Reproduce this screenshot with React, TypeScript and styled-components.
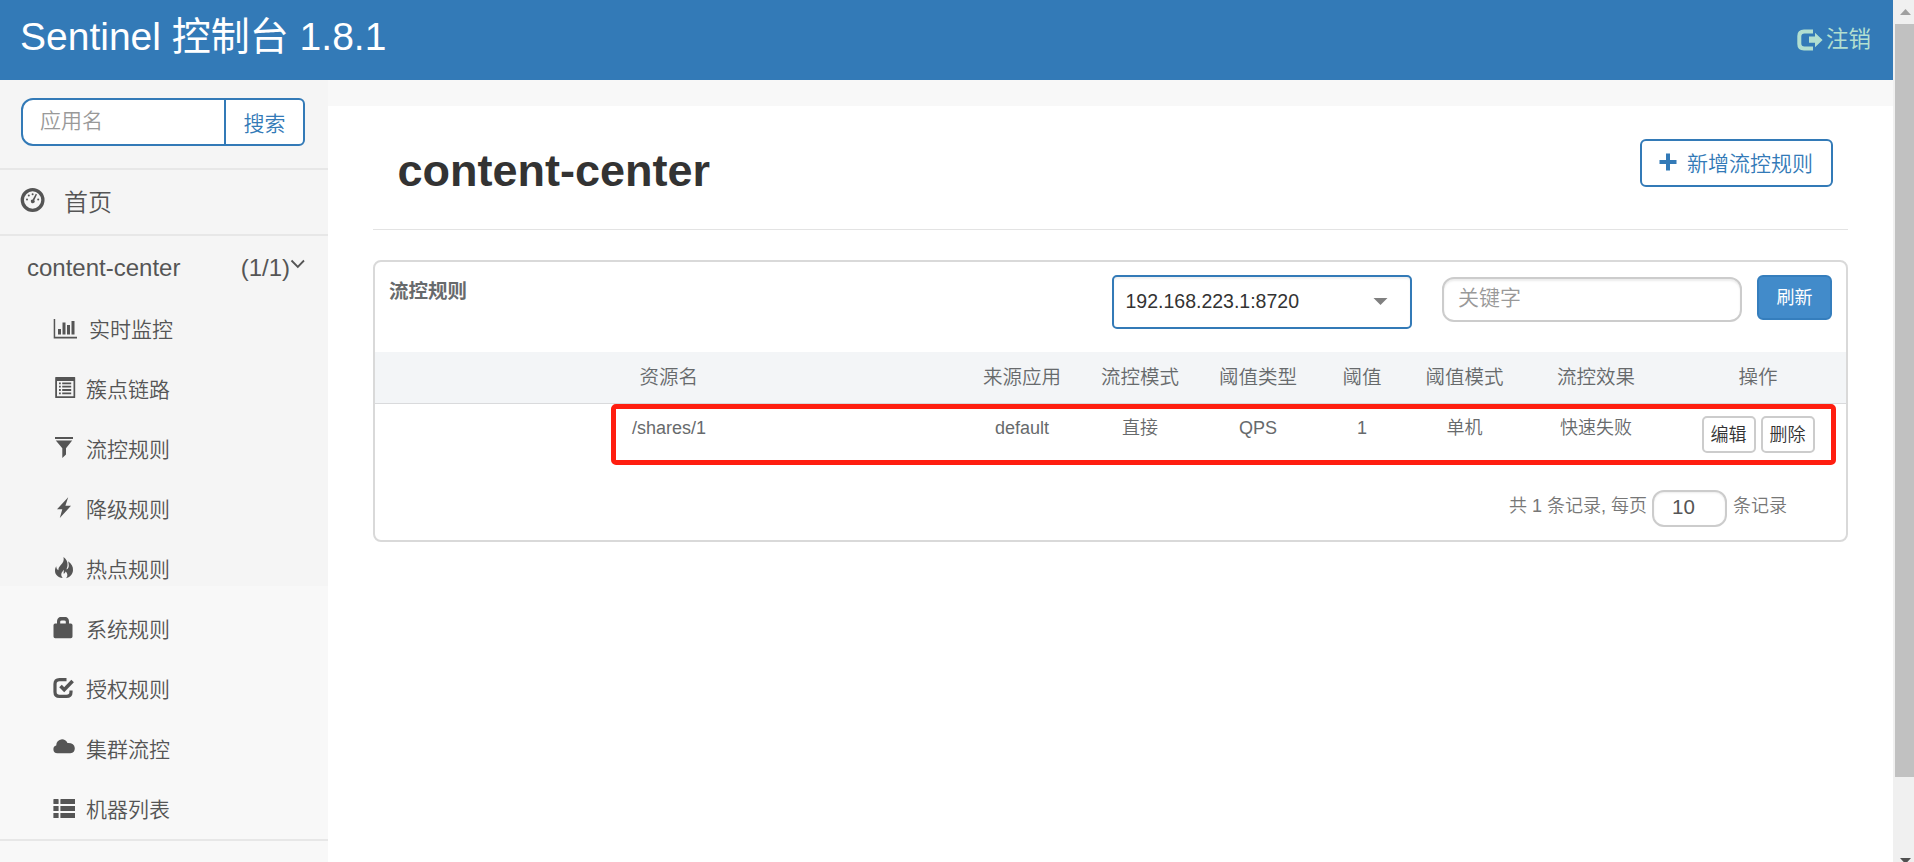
import React from 'react';
import styled, { createGlobalStyle } from 'styled-components';

const GlobalStyle = createGlobalStyle`
  * { box-sizing: border-box; }
  body {
    margin: 0;
    overflow: hidden;
    background: #fff;
    color: #676a6c;
    font-family: "Liberation Sans", "Noto Sans CJK SC", sans-serif;
    font-weight: 350;
  }
  input, button { font-family: inherit; font-weight: inherit; margin: 0; outline: none; }
`;

const Window = styled.div`
  display: flex;
  width: 1914px;
  height: 862px;
`;

const Page = styled.div`
  display: flex;
  flex-direction: column;
  width: 1893px;
  height: 862px;
  background: #fff;
`;

const Header = styled.header`
  display: flex;
  justify-content: space-between;
  height: 80px;
  flex: none;
  padding: 0 22px 0 20px;
  background: #337ab7;
`;

const Brand = styled.div`
  color: #fff;
  font-size: 39px;
  line-height: 74px;
  font-weight: 400;
  white-space: nowrap;
`;

const Logout = styled.a`
  display: flex;
  align-items: center;
  gap: 3px;
  color: #b2dfd0;
  font-size: 22.5px;
  font-weight: 400;
  line-height: 80px;
`;

const Body = styled.div`
  display: flex;
  flex: 1;
  min-height: 0;
`;

const Sidebar = styled.aside`
  width: 328px;
  height: 782px;
  flex: none;
  color: #555;
  background: linear-gradient(#f5f5f5 506px, #f8f8f8 506px);
`;

const SearchBox = styled.div`
  display: flex;
  height: 90px;
  padding: 18px 23px 22px 21px;
  border-bottom: 2px solid #e7e7e7;
`;

const SearchInput = styled.input`
  width: 205px;
  height: 48px;
  padding: 0 0 2px 17px;
  border: 2px solid #337ab7;
  border-radius: 12px 0 0 12px;
  background: #fff;
  font-size: 21px;
  &::placeholder { color: #999; opacity: 1; }
`;

const SearchButton = styled.button`
  width: 81px;
  height: 48px;
  margin-left: -2px;
  padding: 0 0 1px;
  border: 2px solid #337ab7;
  border-radius: 0 6px 6px 0;
  background: #fff;
  color: #337ab7;
  font-size: 21px;
`;

const HomeLink = styled.a`
  display: flex;
  align-items: center;
  gap: 19px;
  height: 66px;
  padding: 0 0 3px 20px;
  border-bottom: 2px solid #e7e7e7;
  font-size: 24px;
  svg { margin-top: -1px; }
`;

const AppLink = styled.a`
  display: flex;
  align-items: center;
  height: 63px;
  padding: 0 23px 0 27px;
  font-size: 24px;
  font-weight: 400;
`;

const AppCount = styled.span`
  margin-left: auto;
`;

const Menu = styled.nav`
  height: 542px;
  border-bottom: 2px solid #e7e7e7;
`;

const MenuItem = styled.a<{ $gap: number }>`
  display: flex;
  align-items: center;
  gap: ${(p) => p.$gap}px;
  height: 60px;
  padding-left: 53px;
  font-size: 21px;
`;

const MenuLabel = styled.span`
  margin-top: -2px;
`;

const Main = styled.main`
  flex: 1;
  padding: 0 45px;
  border-top: 26px solid #f8f8f8;
`;

const TitleBar = styled.div`
  display: flex;
  justify-content: space-between;
  height: 124px;
  padding: 33px 15px 0 24.5px;
  border-bottom: 1px solid #e3e3e3;
`;

const Title = styled.h1`
  margin: 0;
  color: #333;
  font-size: 45px;
  line-height: 64px;
  font-weight: 700;
`;

const AddButton = styled.button`
  display: flex;
  align-items: center;
  gap: 10px;
  width: 193px;
  height: 48px;
  padding: 0 0 2px 17px;
  border: 2px solid #337ab7;
  border-radius: 6px;
  background: #fff;
  color: #337ab7;
  font-size: 21px;
  white-space: nowrap;
`;

const Panel = styled.section`
  height: 282px;
  margin-top: 30px;
  border: 2px solid #d9d9d9;
  border-radius: 8px;
`;

const Toolbar = styled.div`
  display: flex;
  align-items: flex-start;
  height: 90px;
  padding: 13px 14px 0 14px;
`;

const PanelTitle = styled.strong`
  font-size: 19.5px;
  line-height: 32px;
  font-weight: 700;
`;

const MachineSelect = styled.div`
  display: flex;
  align-items: center;
  justify-content: space-between;
  width: 300px;
  height: 54px;
  margin-left: auto;
  padding: 0 22px 1px 11.5px;
  border: 2px solid #337ab7;
  border-radius: 5px;
  box-shadow: inset 0 2px 2px rgba(0, 0, 0, 0.06);
  color: #333;
  font-size: 19.5px;
  font-weight: 400;
`;

const KeywordInput = styled.input`
  width: 300px;
  height: 45px;
  margin: 2px 15px 0 30px;
  padding: 0 14px 3px;
  border: 2px solid #ccc;
  border-radius: 12px;
  box-shadow: inset 0 2px 2px rgba(0, 0, 0, 0.075);
  font-size: 21px;
  &::placeholder { color: #999; opacity: 1; }
`;

const RefreshButton = styled.button`
  width: 75px;
  height: 45px;
  padding: 0 0 3px;
  border: 2px solid #357ebd;
  border-radius: 6px;
  background: #428bca;
  color: #fff;
  font-size: 18px;
  font-weight: 400;
`;

const tableColumns = '240px 348px 118px 118px 118px 90px 115px 148px 1fr';

const HeadRow = styled.div`
  display: grid;
  grid-template-columns: ${tableColumns};
  height: 52px;
  border-bottom: 1px solid #d9dadc;
  background: #f3f5f7;
  font-size: 19.5px;
  line-height: 50px;
`;

const DataRow = styled.div`
  position: relative;
  display: grid;
  grid-template-columns: ${tableColumns};
  height: 61px;
  font-size: 18px;
  line-height: 48px;
`;

const Cell = styled.div<{ $indent?: number }>`
  padding-left: ${(p) => p.$indent ?? 0}px;
  text-align: ${(p) => (p.$indent ? 'left' : 'center')};
  white-space: nowrap;
`;

const ActionCell = styled.div`
  display: flex;
  justify-content: center;
  gap: 5px;
  padding-top: 12px;
`;

const SmallButton = styled.button`
  width: 54px;
  height: 37px;
  padding: 0 0 4px;
  border: 2px solid #ccc;
  border-radius: 5px;
  background: #fff;
  color: #333;
  font-size: 18px;
`;

/* Highlight frame drawn over the table row. */
const Highlight = styled.div`
  position: absolute;
  inset: 0 10px 0 236px;
  border: 5px solid #ff1e10;
  border-radius: 5px;
  pointer-events: none;
`;

const Pager = styled.div`
  display: flex;
  justify-content: flex-end;
  padding: 25px 59px 0 0;
  color: #777;
  font-size: 18px;
  line-height: 33px;
`;

const PageSize = styled.input`
  width: 75px;
  height: 37px;
  margin: 0 6px 0 5px;
  padding: 0 0 3px 18px;
  border: 2px solid #ccc;
  border-radius: 12px;
  box-shadow: inset 0 1px 2px rgba(0, 0, 0, 0.075);
  color: #555;
  font-size: 20.5px;
  font-weight: 400;
`;

const ScrollTrack = styled.div`
  display: flex;
  flex-direction: column;
  justify-content: space-between;
  width: 21px;
  height: 862px;
  padding-left: 2px;
  background: #f0f0f0;
  overflow: hidden;
`;

const ScrollArrow = styled.div<{ $down?: boolean }>`
  flex: none;
  height: ${(p) => (p.$down ? 4 : 24)}px;
  padding: ${(p) => (p.$down ? '0' : '9px')} 0 0 5px;
  overflow: hidden;
  svg { display: block; }
`;

const ScrollThumb = styled.div`
  height: 753px;
  margin-bottom: auto;
  background: #c1c1c1;
`;

const Glyph = styled.svg`
  flex: none;
  fill: currentColor;
`;

type IconProps = { children: React.ReactNode; w?: number; h?: number };

const Icon = ({ children, w = 24, h = 24 }: IconProps) => (
  <Glyph width={w} height={h} viewBox={`0 0 ${w} ${h}`}>
    {children}
  </Glyph>
);

const menu = [
  {
    label: '实时监控',
    gap: 12,
    icon: <path d="M0.7 2h1.5v17.8H24v1.6H0.7zM5 12h3v5.6H5zM9.5 5.600h3v12h-3zM14 8.100h3v9.500h-3zM18.500 4h3v13.600h-3z" />,
  },
  {
    label: '簇点链路',
    icon: (
      <>
        <path fillRule="evenodd" d="M2.8 0h18.8q.6 0 .6.6v19.8q0 .6-.6.6H2.8q-.6 0-.6-.6V.6q0-.6.6-.6zM4 4v15.3h16.5V4z" />
        <path d="M6 5.500h1.800v1.800H6zM9.200 5.500h9v1.800h-9zM6 8.800h1.800v1.800H6zM9.200 8.800h9v1.800h-9zM6 12.100h1.800v1.800H6zM9.200 12.100h9v1.800h-9zM6 15.400h1.800v1.800H6zM9.200 15.400h9v1.800h-9z" />
      </>
    ),
  },
  { label: '流控规则', icon: <path d="M2 0h18v2.100H2zM2.800 3.500h16.400L13 11.200v6.300L9.300 21v-9.800z" /> },
  { label: '降级规则', icon: <path d="M15.200 0.200L4 12.300h5.300L6.800 21 18 8.800h-5.600z" /> },
  {
    label: '热点规则',
    icon: <path d="M10.500 0c3 2.300 4.300 4.800 4 8.200-.1 1.700-.8 3-1 4.300 1.400-.4 2.300-2 2.300-4 0-1.400-.5-3-.7-4.300 3.600 2.400 5.200 5.600 4.900 9.300-.4 4.200-3.300 6.800-6.900 7.700 2-2.500 1.500-4.700-.4-6.700-.5 1.200-1.200 2-2 2.300-.2-1.600.2-2.700.2-4-2.300 2.500-3.800 5-1.200 8.200C4.800 20.300 2 17.600 2 13.700c0-2 .5-3.200 1.200-4.400.2 2 .7 3.300 2.200 3.900-.2-2 .8-3.600 2.600-5.500C10.300 5.400 11.200 3.300 10.500 0z" />,
  },
  {
    label: '系统规则',
    icon: <path fillRule="evenodd" d="M4 6.500V4.700Q4-.3 9-.3h2q5 0 5 5v1.800h1.800q1.700 0 1.700 1.700v11.300q0 1.700-1.700 1.700H2.200Q.5 21.200.5 19.500V8.200q0-1.700 1.700-1.700zM7.200 6.500h5.600V4.600q0-1.200-1.800-1.200H9q-1.800 0-1.800 1.200z" />,
  },
  {
    label: '授权规则',
    icon: (
      <>
        <path d="M13.500 2.600H6.500Q2 2.600 2 7v8q0 4.400 4.500 4.400h7q4.500 0 4.500-4.400v-1.500" fill="none" stroke="currentColor" strokeWidth="3.200" />
        <path d="M7.500 9l3.700 3.700 8.400-8.600" fill="none" stroke="currentColor" strokeWidth="3.600" />
      </>
    ),
  },
  {
    label: '集群流控',
    icon: <path d="M4.500 16.200Q.4 16 .4 12.200.4 9 3.200 8.400 3.400 3 9 2.200q3.600 0 5.500 3.700 6.700-.3 7.300 5 .2 4.800-4.500 5.300z" />,
  },
  {
    label: '机器列表',
    icon: <path d="M1 2h4q.6 0 .6.600v3.800q0 .6-.6.600H1q-.6 0-.6-.6V2.600Q.4 2 1 2zM8 2h14v5H8Q7.400 7 7.400 6.400V2.600Q7.400 2 8 2zM.4 9h5.200v5H.4zM7.400 9H22v5H7.400zM.4 16h5.200v5H.4zM7.400 16H22v5H7.400z" />,
  },
];

const heads = ['来源应用', '流控模式', '阈值类型', '阈值', '阈值模式', '流控效果', '操作'];
const values = ['default', '直接', 'QPS', '1', '单机', '快速失败'];

export default function App() {
  return (
    <>
      <GlobalStyle />
      <Window>
        <Page>
          <Header>
            <Brand>Sentinel 控制台 1.8.1</Brand>
            <Logout>
              <Icon w={27} h={24}>
                <path d="M17 1.500H8Q1.300 1.500 1.300 8v8q0 6.500 6.700 6.500h9v-4H8.500Q5.300 18.500 5.300 15.500v-7q0-3 3.200-3H17z" />
                <path d="M13 8.500h6v-3.700L26.600 12 19 19.200v-4.400h-6z" />
              </Icon>
              注销
            </Logout>
          </Header>
          <Body>
            <Sidebar>
              <SearchBox>
                <SearchInput placeholder="应用名" />
                <SearchButton>搜索</SearchButton>
              </SearchBox>
              <HomeLink>
                <Icon w={25} h={24}>
                  <circle cx="12.600" cy="12" r="10.300" fill="none" stroke="currentColor" strokeWidth="3.300" />
                  <path d="M15.800 5.800l1.200.6-2.700 5.800a1.900 1.900 0 1 1-1.600-.8z" />
                  <circle cx="7" cy="11.500" r="1" />
                  <circle cx="8.800" cy="7.600" r="1" />
                  <circle cx="12.600" cy="6.200" r="1" />
                  <circle cx="18.200" cy="11.500" r="1" />
                </Icon>
                首页
              </HomeLink>
              <AppLink>
                content-center
                <AppCount>(1/1)</AppCount>
                <Icon w={15} h={20}>
                  <path d="M1.500 2.500l6.300 6.400 6.200-6.400" fill="none" stroke="currentColor" strokeWidth="1.800" />
                </Icon>
              </AppLink>
              <Menu>
                {menu.map((item) => (
                  <MenuItem key={item.label} $gap={item.gap ?? 9}>
                    <Icon>{item.icon}</Icon>
                    <MenuLabel>{item.label}</MenuLabel>
                  </MenuItem>
                ))}
              </Menu>
            </Sidebar>
            <Main>
              <TitleBar>
                <Title>content-center</Title>
                <AddButton>
                  <Icon w={18} h={18}>
                    <path d="M7 .5h4V7h6.500v4H11v6.500H7V11H.5V7H7z" />
                  </Icon>
                  新增流控规则
                </AddButton>
              </TitleBar>
              <Panel>
                <Toolbar>
                  <PanelTitle>流控规则</PanelTitle>
                  <MachineSelect>
                    192.168.223.1:8720
                    <Icon w={15} h={8}>
                      <path d="M0.500 0h14L7.500 7z" fill="#808080" />
                    </Icon>
                  </MachineSelect>
                  <KeywordInput placeholder="关键字" />
                  <RefreshButton>刷新</RefreshButton>
                </Toolbar>
                <HeadRow>
                  <Cell />
                  <Cell $indent={24.5}>资源名</Cell>
                  {heads.map((h) => (
                    <Cell key={h}>{h}</Cell>
                  ))}
                </HeadRow>
                <DataRow>
                  <Cell />
                  <Cell $indent={17}>/shares/1</Cell>
                  {values.map((v) => (
                    <Cell key={v}>{v}</Cell>
                  ))}
                  <ActionCell>
                    <SmallButton>编辑</SmallButton>
                    <SmallButton>删除</SmallButton>
                  </ActionCell>
                  <Highlight />
                </DataRow>
                <Pager>
                  共 1 条记录, 每页
                  <PageSize defaultValue="10" />
                  条记录
                </Pager>
              </Panel>
            </Main>
          </Body>
        </Page>
        <ScrollTrack>
          <ScrollArrow>
            <Icon w={11} h={6}>
              <path d="M0 6L5.500 0 11 6z" fill="#a0a0a0" />
            </Icon>
          </ScrollArrow>
          <ScrollThumb />
          <ScrollArrow $down>
            <Icon w={11} h={6}>
              <path d="M0 0h11L5.500 6z" fill="#505050" />
            </Icon>
          </ScrollArrow>
        </ScrollTrack>
      </Window>
    </>
  );
}
